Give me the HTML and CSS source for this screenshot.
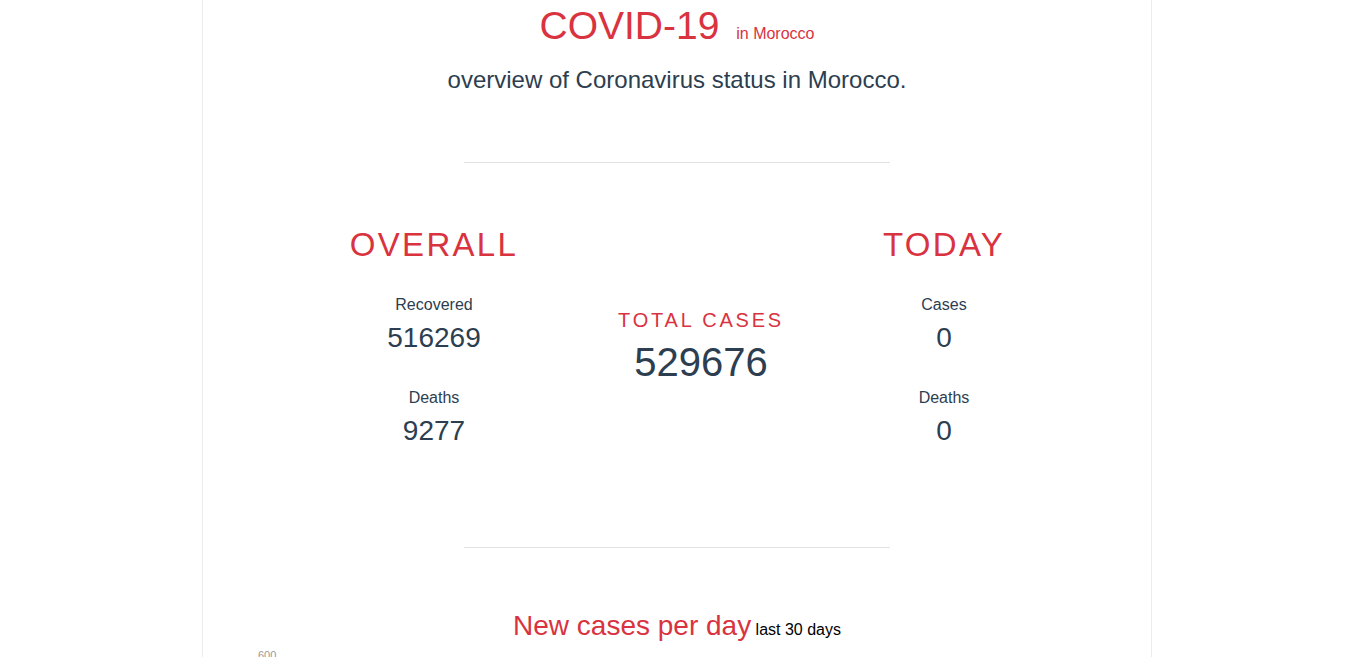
FILE: index.html
```html
<!DOCTYPE html>
<html>
<head>
<meta charset="utf-8">
<link rel="stylesheet" href="styles.css">
</head>
<body>
<div class="page">
  <header class="head">
    <h1 class="title">COVID-19 <small class="where">in Morocco</small></h1>
    <p class="lead">overview of Coronavirus status in Morocco.</p>
  </header>
  <hr class="sep">
  <section class="stats">
    <div class="col col-left">
      <h2 class="col-title">OVERALL</h2>
      <div class="stat"><div class="label">Recovered</div><div class="num">516269</div></div>
      <div class="stat"><div class="label">Deaths</div><div class="num">9277</div></div>
    </div>
    <div class="col col-mid">
      <div class="total-label">TOTAL CASES</div>
      <div class="total-num">529676</div>
    </div>
    <div class="col col-right">
      <h2 class="col-title">TODAY</h2>
      <div class="stat"><div class="label">Cases</div><div class="num">0</div></div>
      <div class="stat"><div class="label">Deaths</div><div class="num">0</div></div>
    </div>
  </section>
  <hr class="sep sep2">
  <section class="chart">
    <h3 class="chart-title">New cases per day<small class="sub"> last 30 days</small></h3>
    <div class="axis">600</div>
  </section>
</div>
</body>
</html>
```
FILE: styles.css
```css
html, body {
  margin: 0;
  padding: 0;
  background: #fff;
  font-family: "Liberation Sans", Arial, sans-serif;
  color: #2c3e50;
}
.page {
  width: 948px;
  margin: 0 auto;
  border-left: 1px solid #ececec;
  border-right: 1px solid #ececec;
  min-height: 657px;
  overflow: hidden;
}
.head {
  text-align: center;
  padding-top: 2px;
}
.title {
  margin: 0;
  font-weight: 400;
  font-size: 39px;
  line-height: 47px;
  color: #d9333f;
}
.where {
  font-size: 16px;
  margin-left: 6px;
}
.lead {
  margin: 8px 0 0;
  font-size: 24px;
  line-height: 30px;
}
.sep {
  width: 426px;
  margin: 67px auto 0;
  border: 0;
  border-top: 1px solid #e3e3e3;
  height: 0;
}
.stats {
  display: grid;
  grid-template-columns: 340px 194px 292px;
  margin: 63px 0 0 61px;
  text-align: center;
}
.col-title {
  margin: 0;
  font-weight: 400;
  font-size: 33px;
  line-height: 38px;
  letter-spacing: 2.3px;
  color: #d9333f;
}
.stat {
  margin-top: 31px;
}
.stat + .stat {
  margin-top: 33px;
}
.label {
  font-size: 16px;
  line-height: 20px;
}
.num {
  font-size: 28px;
  line-height: 34px;
  margin-top: 6px;
}
.col-mid {
  padding-top: 82px;
}
.total-label {
  font-size: 20px;
  line-height: 24px;
  letter-spacing: 2.8px;
  color: #d9333f;
}
.total-num {
  font-size: 40px;
  line-height: 48px;
  margin-top: 6px;
}
.sep2 {
  margin-top: 99px;
}
.chart {
  text-align: center;
}
.chart-title {
  margin: 61px 0 0;
  font-weight: 400;
  font-size: 28px;
  line-height: 34px;
  color: #d9333f;
}
.sub {
  font-size: 16px;
  color: #000;
}
.axis {
  text-align: left;
  margin: 2px 0 0 55px;
  font-size: 11px;
  line-height: 13px;
  color: #999;
}
```
